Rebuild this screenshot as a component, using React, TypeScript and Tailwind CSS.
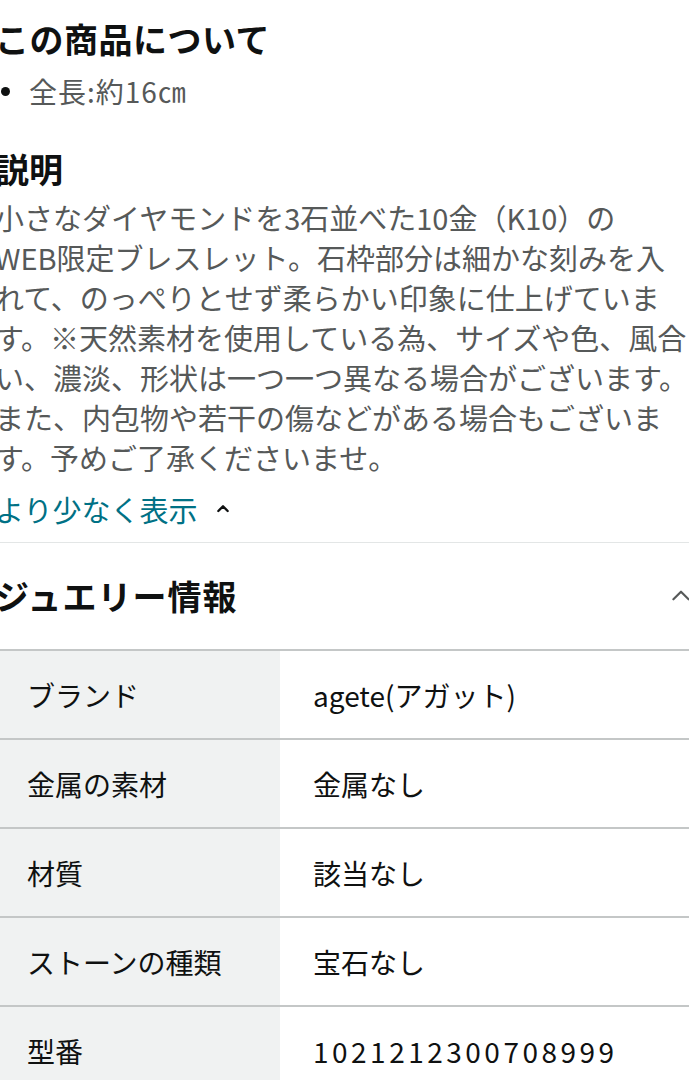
import React from "react";

const specs = [
  { label: "ブランド", value: "agete(アガット)" },
  { label: "金属の素材", value: "金属なし" },
  { label: "材質", value: "該当なし" },
  { label: "ストーンの種類", value: "宝石なし" },
  { label: "型番", value: "1021212300708999", mono: true },
];

const description = [
  "小さなダイヤモンドを3石並べた10金（K10）の",
  "WEB限定ブレスレット。石枠部分は細かな刻みを入",
  "れて、のっぺりとせず柔らかい印象に仕上げていま",
  "す。※天然素材を使用している為、サイズや色、風合",
  "い、濃淡、形状は一つ一つ異なる場合がございます。",
  "また、内包物や若干の傷などがある場合もございま",
  "す。予めご了承くださいませ。",
];

const ChevronUp = ({ className }: { className?: string }) => (
  <svg viewBox="0 0 24 24" fill="none" stroke="currentColor" strokeLinecap="round" strokeLinejoin="round" className={className}>
    <path d="M5 15l7-7 7 7" />
  </svg>
);

const App = () => {
  return (
    <div className="w-[689px] h-[1080px] overflow-hidden bg-white font-['Noto_Sans_CJK_JP',sans-serif]">
      <div className="-ml-[5px] w-[720px]">
        <h2 className="pt-[17px] text-[34px] leading-[44px] font-bold text-[#0f1111] tracking-[0.5px]">
          この商品について
        </h2>
        <ul className="mt-[10px] pl-[6px]">
          <li className="flex items-center text-[28px] leading-[40px] text-[#565959]">
            <span className="w-[9px] h-[9px] rounded-full bg-[#0f1111] mr-[19px]" />
            <span className="tracking-[1px]">全長:約16㎝</span>
          </li>
        </ul>

        <h2 className="mt-[36px] text-[34px] leading-[44px] font-bold text-[#0f1111]">
          説明
        </h2>
        <p className="mt-[6px] text-[29px] leading-[40px] text-[#565959] whitespace-nowrap">
          {description.map((line, i) => (
            <React.Fragment key={i}>
              {line}
              {i < description.length - 1 && <br />}
            </React.Fragment>
          ))}
        </p>
        <div className="mt-[12px] flex items-center gap-[18px] text-[29px] leading-[40px] text-[#007185]">
          <span>より少なく表示</span>
          <ChevronUp className="w-[16px] h-[16px] text-[#0f1111] stroke-[3.5]" />
        </div>

        <div className="mt-[13px] h-px bg-[#e3e6e6]" />

        <div className="h-[106px] flex items-center justify-between pr-[21px]">
          <h2 className="text-[34px] leading-[44px] font-bold text-[#0f1111] tracking-[1px]">
            ジュエリー情報
          </h2>
          <ChevronUp className="w-[26px] h-[26px] text-[#565959] stroke-[2]" />
        </div>

        <div className="border-t-2 border-[#c4c7c7]">
          {specs.map((s) => (
            <div key={s.label} className="flex h-[89px] border-b-2 border-[#c4c7c7] text-[28px] text-[#0f1111]">
              <div className="w-[285px] bg-[#f0f2f2] pl-[32px] flex items-center">
                {s.label}
              </div>
              <div className={`flex-1 pl-[33px] flex items-center ${s.mono ? "tracking-[3.5px]" : ""}`}>
                {s.value}
              </div>
            </div>
          ))}
        </div>
      </div>
    </div>
  );
};

export default App;
